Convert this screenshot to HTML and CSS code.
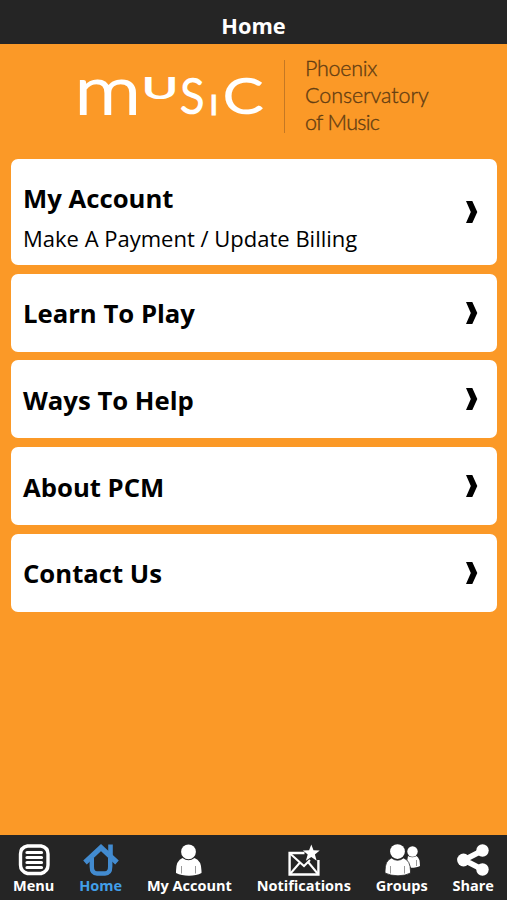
FILE: index.html
```html
<!DOCTYPE html>
<html lang="en">
	<head>
		<meta charset="UTF-8" />
		<meta name="viewport" content="width=device-width, initial-scale=1.0" />
		<title>Home</title>
		<link rel="stylesheet" href="styles.css">
	</head>
	<body>
		<header class="topbar">Home</header>

		<main class="content">
			<div class="brand">
				<svg class="wordmark" width="214" height="115" viewBox="70 44 214 115">
					<text x="74.500" y="113.500" font-size="67" stroke-width="2.200" textLength="66.500" lengthAdjust="spacingAndGlyphs">m</text>
					<text x="142.500" y="97.500" font-size="27" stroke-width="2.200" textLength="35" lengthAdjust="spacingAndGlyphs">U</text>
					<text x="180.500" y="113.300" font-size="47.500" textLength="23.500" lengthAdjust="spacingAndGlyphs">S</text>
					<text x="210.500" y="113.500" font-size="25" stroke-width="3">I</text>
					<text x="223.500" y="113.300" font-size="47.500" textLength="39" lengthAdjust="spacingAndGlyphs">C</text>
				</svg>
				<p class="brand-name">
					<span class="phoenix">Phoenix</span>
					<span>Conservatory</span>
					<span class="music">of Music</span>
				</p>
			</div>

			<ul class="links">
				<li class="tall">
					<div>
						<h2>My Account</h2>
						<p>Make A Payment / Update Billing</p>
					</div>
					<svg class="arrow" width="12" height="22" viewBox="0 0 12 22"><path d="M0 0h6.300l5 11-5 11H0l4.800-11z" /></svg>
				</li>
				<li>
					<h2>Learn To Play</h2>
					<svg class="arrow" width="12" height="22" viewBox="0 0 12 22"><path d="M0 0h6.300l5 11-5 11H0l4.800-11z" /></svg>
				</li>
				<li>
					<h2>Ways To Help</h2>
					<svg class="arrow" width="12" height="22" viewBox="0 0 12 22"><path d="M0 0h6.300l5 11-5 11H0l4.800-11z" /></svg>
				</li>
				<li>
					<h2>About PCM</h2>
					<svg class="arrow" width="12" height="22" viewBox="0 0 12 22"><path d="M0 0h6.300l5 11-5 11H0l4.800-11z" /></svg>
				</li>
				<li>
					<h2>Contact Us</h2>
					<svg class="arrow" width="12" height="22" viewBox="0 0 12 22"><path d="M0 0h6.300l5 11-5 11H0l4.800-11z" /></svg>
				</li>
			</ul>
		</main>

		<nav class="tabs">
			<a>
				<svg width="34" height="34" viewBox="0 0 34 34" fill="none" stroke="#fff" stroke-linecap="round">
					<path d="M10.500 3h13.500q7 1.500 7 8v11q0 6.500-7 8.500H10.500q-7-2-7-8.500v-11q0-6.500 7-8z" stroke-width="3.400" />
					<path d="M10 9.500h14.500M10 14.500h14.500M10 19.500h14.500M10 24.500h14.500" stroke-width="3.200" />
				</svg>
				<span>Menu</span>
			</a>
			<a class="active">
				<svg width="36" height="34" viewBox="0 0 36 34" fill="none" stroke="#428bd0">
					<path d="M2 19.500L18 4.500l16 15" stroke-width="5.200" />
					<path d="M27.500 1.500v11" stroke-width="4.600" />
					<path d="M8.800 15v8.500q0 7 5.200 7h8q5.200 0 5.200-7V15" stroke-width="4.400" />
				</svg>
				<span>Home</span>
			</a>
			<a>
				<svg width="28" height="34" viewBox="0 0 28 34">
					<circle cx="13.500" cy="8.800" r="7.400" fill="#fff" />
					<path d="M7.500 15q6 4.500 12 0 7 2.500 7 13v2q-5 2.800-12.500 2.800T1 30v-2q0-10.500 6.500-13z" fill="#fff" />
					<path d="M6.500 23v7.500M20.500 23v7.500" stroke="#999" />
				</svg>
				<span>My Account</span>
			</a>
			<a>
				<svg width="34" height="34" viewBox="0 0 34 34" fill="none" stroke="#fff" stroke-width="2.400">
					<path d="M17.500 10H2.600v21.500h28.800V17" />
					<path d="M3 10.500l14 12.500 6-6M3 31l10-11.500M31 31L21.500 19.500" stroke-width="2" />
					<path d="M24.300 1.500l2.200 5.700 6.200.3-4.800 3.900 1.800 6.300-5.400-3.600-5.400 3.600 1.800-6.300-4.800-3.900 6.200-.3z" fill="#fff" stroke="none" />
				</svg>
				<span>Notifications</span>
			</a>
			<a>
				<svg width="36" height="34" viewBox="0 0 36 34">
					<g fill="#fff">
						<circle cx="28.500" cy="8.500" r="5.200" />
						<path d="M24 13q4.500 2.500 8.500 0 3.500 2 3.500 10-3 1.800-9 1.800l-4-6z" />
						<circle cx="13.500" cy="8.600" r="7.400" />
						<path d="M7.500 15q6 4.500 12 0 7 2.500 7 13v2q-5 2.800-12.500 2.800T1 30v-2q0-10.500 6.500-13z" stroke="#252525" stroke-width=".8" />
					</g>
					<path d="M6.500 23v7.500M20.500 23v7.500M32.500 17v6" stroke="#999" />
				</svg>
				<span>Groups</span>
			</a>
			<a>
				<svg width="34" height="34" viewBox="0 0 34 34" fill="#fff">
					<path d="M26.500 7.500L8 17l18.500 9.500" fill="none" stroke="#fff" stroke-width="5.600" />
					<circle cx="26.500" cy="7.500" r="6.200" />
					<circle cx="7.500" cy="17" r="6.400" />
					<circle cx="26.500" cy="26.500" r="6.200" />
				</svg>
				<span>Share</span>
			</a>
		</nav>
	</body>
</html>
```

FILE: styles.css
```css
body,
ul,
p,
h2 {
	margin: 0;
	padding: 0;
	list-style: none;
}
body {
	height: 900px;
	display: flex;
	flex-direction: column;
	overflow: hidden;
	background: #fb9927;
	color: #000;
	font-family: "Open Sans", sans-serif;
}
svg {
	display: block;
}
.topbar {
	height: 44px;
	line-height: 51px;
	background: #252525;
	color: #fff;
	font-size: 21.8px;
	font-weight: 700;
	text-align: center;
}
.content {
	flex: 1;
}
.brand {
	display: flex;
	height: 115px;
	padding-left: 70px;
}
.wordmark {
	fill: #fff;
	stroke: #fff;
	stroke-width: 2.7;
	font-family: Lato, sans-serif;
	font-weight: 300;
}
.brand-name {
	height: 73px;
	margin-top: 16px;
	padding-left: 20px;
	border-left: 1.5px solid #c47824;
	color: #633d12;
	-webkit-text-stroke: 0.35px #633d12;
	font-family: Lato, sans-serif;
	font-size: 21.5px;
	font-weight: 300;
	line-height: 27px;
	letter-spacing: -0.08px;
}
.brand-name span {
	display: block;
	margin-top: -5px;
	margin-bottom: 5px;
}
.brand-name .phoenix {
	letter-spacing: -0.3px;
}
.brand-name .music {
	letter-spacing: -0.7px;
}
.links {
	display: flex;
	flex-direction: column;
	gap: 8.7px;
	padding: 0 10px 0 11px;
}
.links li {
	height: 78px;
	display: flex;
	align-items: center;
	justify-content: space-between;
	box-sizing: border-box;
	padding: 3px 19px 0 12px;
	border-radius: 7px;
	background: #fff;
}
.links .tall {
	height: 106px;
}
.links .tall div {
	padding-top: 10px;
}
.links h2 {
	font-size: 25.7px;
	font-weight: 700;
	line-height: 40px;
}
.links p {
	font-size: 22px;
	line-height: 39px;
}
.arrow {
	margin-bottom: 3px;
}
.tabs {
	height: 65px;
	display: flex;
	justify-content: space-between;
	box-sizing: border-box;
	padding: 8px 13px 0;
	background: #252525;
	color: #fff;
	font-size: 14.5px;
	font-weight: 700;
	line-height: 18px;
}
.tabs a {
	display: flex;
	flex-direction: column;
	align-items: center;
}
.tabs .active {
	color: #429fe8;
}
```
